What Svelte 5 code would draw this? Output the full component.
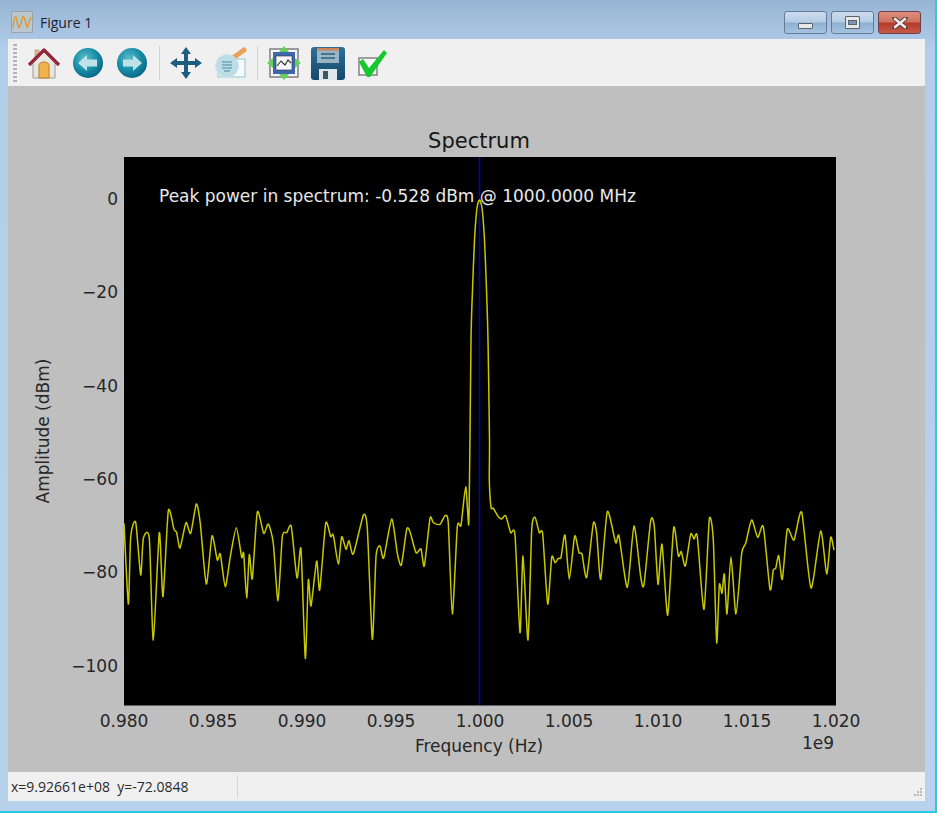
<script>
    // trace points read off the plot, in page pixels after the offset below
    const left = [[12,130],[25,372],[32,170],[47,127],[62,285],[70,175],[88,175],[100,480],[118,158],[129,350],[145,92],[162,148],[170,158],[180,204],[198,128],[212,160],[229,72],[241,130],[259,312],[276,168],[292,240],[301,222],[316,320],[331,230],[349,143],[365,232],[371,220],[380,354],[388,224],[397,296],[412,96],[431,160],[445,132],[460,190],[474,362],[487,170],[500,158],[514,140],[531,294],[543,207],[556,535],[565,300],[573,378],[590,243],[599,330],[617,130],[632,170],[640,165],[655,252],[665,170],[678,208],[687,182],[700,222],[730,106],[742,145],[757,478],[768,230],[780,197],[791,234],[815,117],[832,220],[844,255],[860,148],[870,155],[888,218],[903,207],[913,258],[930,115],[940,128],[960,133],[975,107],[985,130],[997,402],[1012,140],[1023,136],[1037,20],[1046,135]];
    const right = [[28,0],[33,82],[40,85],[55,110],[65,117],[77,107],[92,158],[105,165],[120,458],[129,228],[144,480],[155,150],[165,112],[178,158],[188,162],[203,372],[215,232],[225,248],[235,235],[243,232],[255,165],[268,298],[284,168],[297,218],[306,222],[320,292],[340,130],[350,160],[362,298],[382,95],[407,188],[417,168],[442,322],[462,138],[482,290],[492,314],[512,122],[523,140],[534,313],[546,193],[563,406],[581,143],[595,228],[604,215],[616,258],[632,163],[642,177],[652,170],[672,388],[688,118],[700,180],[710,488],[718,315],[726,340],[733,282],[741,402],[753,230],[768,402],[785,220],[797,190],[815,120],[833,172],[850,140],[870,328],[880,270],[887,265],[896,227],[907,298],[922,148],[942,180],[965,97],[993,324],[1022,153],[1040,282],[1052,172],[1062,210]];
    const peak = [[469.5,480],[471,340],[472.5,290],[474.5,240],[477,208],[479.5,200],[482,208],[484.5,240],[486.5,290],[488,340],[489.5,440]];

    const points = [
        ...left.map(([x, y]) => [120 + x / 3, 480 + y / 3]),
        ...peak,
        ...right.map(([x, y]) => [480 + x / 3, 480 + y / 3]),
    ];

    function smooth(pts) {
        let d = `M${pts[0][0].toFixed(1)} ${pts[0][1].toFixed(1)}`;
        for (let i = 0; i < pts.length - 1; i++) {
            const a = pts[Math.max(i - 1, 0)];
            const b = pts[i];
            const c = pts[i + 1];
            const e = pts[Math.min(i + 2, pts.length - 1)];
            const k = 0.11;
            d += `C${(b[0] + (c[0] - a[0]) * k).toFixed(1)} ${(b[1] + (c[1] - a[1]) * k).toFixed(1)} ${(c[0] - (e[0] - b[0]) * k).toFixed(1)} ${(c[1] - (e[1] - b[1]) * k).toFixed(1)} ${c[0].toFixed(1)} ${c[1].toFixed(1)}`;
        }
        return d;
    }

    const trace = smooth(points);
    const yTicks = [["0", 198], ["−20", 291.5], ["−40", 385], ["−60", 478], ["−80", 571.5], ["−100", 665]];
    const xTicks = ["0.980", "0.985", "0.990", "0.995", "1.000", "1.005", "1.010", "1.015", "1.020"];
</script>

<div class="window">
    <div class="titlebar">
        <svg class="app-icon" viewBox="0 0 22 22">
            <rect x="0.5" y="0.5" width="21" height="21" fill="#bcc6ce" stroke="#98a4ad" />
            <path d="M2 17C3 5 5 3 6 10S8 19 10 12 12 2 14 9 16 20 18 11L20 6" fill="none" stroke="#d8962c" stroke-width="1.3" />
        </svg>
        <span class="title">Figure 1</span>
        <div class="controls">
            <div class="ctl"><span class="min-glyph"></span></div>
            <div class="ctl"><span class="max-glyph"></span></div>
            <div class="ctl close">
                <svg viewBox="0 0 16 12" width="16" height="12">
                    <path d="M2.5 1.5 13.5 10.5M13.5 1.5 2.5 10.5" stroke="#59403c" stroke-width="4.4" stroke-linecap="round" />
                    <path d="M3 2 13 10M13 2 3 10" stroke="#f1ecea" stroke-width="2.6" stroke-linecap="round" />
                </svg>
            </div>
        </div>
    </div>

    <div class="toolbar">
        <div class="grip"></div>
        <div class="tool">
            <svg viewBox="0 0 36 36" width="36" height="36">
                <rect x="9" y="5" width="4" height="10" fill="#e6b98a" stroke="#a5876a" stroke-width="0.6" />
                <path d="M7 17 18 7 29 17V33H7Z" fill="#e9e6df" stroke="#9a9a94" />
                <path d="M13 33V21Q13 17 18 17T23 21V33Z" fill="#f1b24a" stroke="#b77c28" />
                <path d="M3 20 18 5 33 20" fill="none" stroke="#93253c" stroke-width="3.2" stroke-linejoin="round" />
            </svg>
        </div>
        <div class="tool">
            <svg viewBox="0 0 36 36" width="36" height="36">
                <circle cx="18" cy="18" r="15" fill="url(#disc)" />
                <path d="M8 18 17 10V14.5H27V21.5H17V26Z" fill="#bfe2e8" />
            </svg>
        </div>
        <div class="tool">
            <svg viewBox="0 0 36 36" width="36" height="36">
                <circle cx="18" cy="18" r="15" fill="url(#disc)" />
                <path d="M28 18 19 10V14.5H9V21.5H19V26Z" fill="#bfe2e8" />
            </svg>
        </div>
        <div class="sep"></div>
        <div class="tool">
            <svg viewBox="0 0 36 36" width="36" height="36">
                <path d="M18 2 23 9H20V16H27V13L34 18 27 23V20H20V27H23L18 34 13 27H16V20H9V23L2 18 9 13V16H16V9H13Z" fill="#1f5d80" />
            </svg>
        </div>
        <div class="tool">
            <svg viewBox="0 0 36 36" width="36" height="36">
                <rect x="6" y="14" width="27" height="18" fill="#f7fbfc" stroke="#a9d3df" stroke-width="1.4" />
                <path d="M21 13 32 5" stroke="#e9a25a" stroke-width="5" stroke-linecap="round" />
                <circle cx="15" cy="21" r="11.5" fill="#bcdde6" stroke="#cfe6ec" />
                <path d="M10 17H20M10 20H20M10 23H20M12 26H18" stroke="#6fa4b8" stroke-width="1.6" />
            </svg>
        </div>
        <div class="sep"></div>
        <div class="tool">
            <svg viewBox="0 0 36 36" width="36" height="36">
                <rect x="4" y="4" width="28" height="28" fill="#f4f4f4" stroke="#777" stroke-width="1.4" />
                <rect x="7" y="7" width="22" height="22" fill="#3f67ad" />
                <rect x="10" y="11" width="16" height="14" fill="#f4f6f8" stroke="#334" stroke-width="0.6" />
                <path d="M11 21 15 16 19 20 22 15 25 18" fill="none" stroke="#333" stroke-width="1.1" />
                <path d="M18 1 23 7H13ZM18 35 13 29H23ZM1 18 7 13V23ZM35 18 29 23V13Z" fill="#66cf5c" />
            </svg>
        </div>
        <div class="tool">
            <svg viewBox="0 0 36 36" width="36" height="36">
                <rect x="1" y="2" width="34" height="33" rx="3" fill="url(#floppy)" />
                <rect x="7" y="3" width="22" height="15" fill="#9cb5c4" />
                <rect x="7" y="3" width="22" height="2.5" fill="#c98457" />
                <path d="M11 9H25M11 13H25" stroke="#2b5f80" stroke-width="1.6" />
                <rect x="9" y="24" width="18" height="11" fill="#dfe6ea" />
                <rect x="13" y="26" width="5" height="8" fill="#3a5568" />
            </svg>
        </div>
        <div class="tool">
            <svg viewBox="0 0 36 36" width="36" height="36">
                <rect x="5" y="13" width="18" height="17" fill="#f8f8f8" stroke="#8a8a8a" stroke-width="1.6" />
                <path d="M5 17 9 14 15 23 30 5 33 8 16 32 13 32Z" fill="#13c92e" />
            </svg>
        </div>
    </div>

    <div class="canvas">
        <svg class="figure" viewBox="8 86 919 688" width="919" height="688">
            <rect x="124" y="157" width="712" height="548.500" fill="#000" />
            <line x1="479.500" y1="157" x2="479.500" y2="705" stroke="#0000c4" stroke-width="1.5" />
            <path d={trace} fill="none" stroke="#c8c800" stroke-width="1.5" stroke-linejoin="round" />
            <text class="peak" x="159" y="202">Peak power in spectrum: -0.528 dBm @ 1000.0000 MHz</text>
            <text class="heading" x="479" y="148" text-anchor="middle">Spectrum</text>
            {#each yTicks as [label, y]}
                <text class="lbl" x="118" y={y + 6.500} text-anchor="end">{label}</text>
            {/each}
            {#each xTicks as label, i}
                <text class="lbl" x={124 + i * 89} y="727" text-anchor="middle">{label}</text>
            {/each}
            <text class="lbl" x="479" y="752" text-anchor="middle">Frequency (Hz)</text>
            <text class="lbl" x="834" y="749" text-anchor="end">1e9</text>
            <text class="lbl" transform="translate(49 431) rotate(-90)" text-anchor="middle">Amplitude (dBm)</text>
        </svg>
    </div>

    <div class="status">
        <div class="coords">x=9.92661e+08&nbsp; y=-72.0848</div>
        <svg class="resize" viewBox="0 0 12 12" width="12" height="12">
            <path d="M9 1h2v2H9zM6 4h2v2H6zM9 4h2v2H9zM3 7h2v2H3zM6 7h2v2H6zM9 7h2v2H9z" fill="#b9b9b9" />
        </svg>
    </div>

    <svg class="defs" width="0" height="0">
        <defs>
            <radialGradient id="disc" cx="0.4" cy="0.35" r="0.7">
                <stop offset="0" stop-color="#5bbccb" />
                <stop offset="0.6" stop-color="#148aa5" />
                <stop offset="1" stop-color="#0a6480" />
            </radialGradient>
            <linearGradient id="floppy" x1="0" y1="0" x2="0" y2="1">
                <stop offset="0" stop-color="#2e6f96" />
                <stop offset="1" stop-color="#15486b" />
            </linearGradient>
        </defs>
    </svg>
</div>

<style>
    :global(body) {
        background: #b9d2ec;
    }
    .window {
        width: 937px;
        height: 813px;
        box-sizing: border-box;
        padding: 0 10px 10px 8px;
        border-right: 2px solid #27c9e4;
        border-bottom: 2px solid #27c9e4;
        background: linear-gradient(#97b4d4, #b3cdea 50px, #b9d2ec);
        display: flex;
        flex-direction: column;
        overflow: hidden;
        position: relative;
    }
    .titlebar {
        height: 39px;
        display: flex;
        align-items: center;
        flex-shrink: 0;
    }
    .app-icon {
        width: 22px;
        height: 22px;
        margin: 5px 0 0 3px;
    }
    .title {
        font-family: "Open Sans", sans-serif;
        font-size: 14px;
        color: #1c2430;
        margin: 5px 0 0 7px;
    }
    .controls {
        margin-left: auto;
        margin-top: 6px;
        margin-right: 4px;
        display: flex;
        gap: 4px;
    }
    .ctl {
        width: 43px;
        height: 23px;
        box-sizing: border-box;
        border: 1px solid #647c99;
        border-radius: 3px;
        background: linear-gradient(#cddcec 0, #b5cde5 48%, #8db0d2 52%, #a5c3df 100%);
        display: flex;
        align-items: center;
        justify-content: center;
    }
    .close {
        border-color: #6b3f4c;
        background: linear-gradient(#dc8e7d 0, #d0715f 48%, #b5392a 52%, #c65a47 100%);
    }
    .min-glyph {
        width: 15px;
        height: 6px;
        box-sizing: border-box;
        margin-top: 6px;
        border: 1px solid #5a6470;
        border-radius: 1px;
        background: #e6e9ec;
    }
    .max-glyph {
        width: 15px;
        height: 13px;
        box-sizing: border-box;
        border: 1px solid #5a6470;
        border-radius: 1px;
        background: #e6e9ec;
        display: flex;
        align-items: center;
        justify-content: center;
    }
    .max-glyph::after {
        content: "";
        width: 7px;
        height: 3px;
        background: #7696b8;
        border: 1px solid #5a6470;
    }
    .toolbar {
        height: 47px;
        flex-shrink: 0;
        background: #f0f0f0;
        display: flex;
        align-items: center;
        padding-left: 5px;
    }
    .grip {
        width: 4px;
        height: 38px;
        margin-right: 5px;
        background: repeating-linear-gradient(#b4b4b4 0 2px, #f0f0f0 2px 4px);
    }
    .tool {
        width: 44px;
        height: 44px;
        display: flex;
        align-items: center;
        justify-content: center;
    }
    .sep {
        width: 1px;
        height: 34px;
        margin: 0 4px 0 5px;
        background: #d4d4d4;
    }
    .canvas {
        flex: 1;
        background: #bfbfbf;
        min-height: 0;
    }
    .figure {
        display: block;
    }
    .figure text {
        font-family: "DejaVu Sans", sans-serif;
    }
    .lbl {
        font-size: 17px;
        fill: #262626;
    }
    .heading {
        font-size: 21px;
        fill: #161616;
    }
    .peak {
        font-size: 17px;
        fill: #e8e8e8;
    }
    .status {
        height: 29px;
        flex-shrink: 0;
        background: #f0f0f0;
        display: flex;
        align-items: center;
        position: relative;
    }
    .coords {
        width: 226px;
        height: 23px;
        line-height: 23px;
        padding-left: 3px;
        border-right: 1px solid #d6d6d6;
        font-family: "Open Sans", sans-serif;
        font-size: 14px;
        color: #2a2a2a;
        white-space: nowrap;
    }
    .resize {
        position: absolute;
        right: 2px;
        bottom: 2px;
    }
    .defs {
        position: absolute;
    }
</style>
